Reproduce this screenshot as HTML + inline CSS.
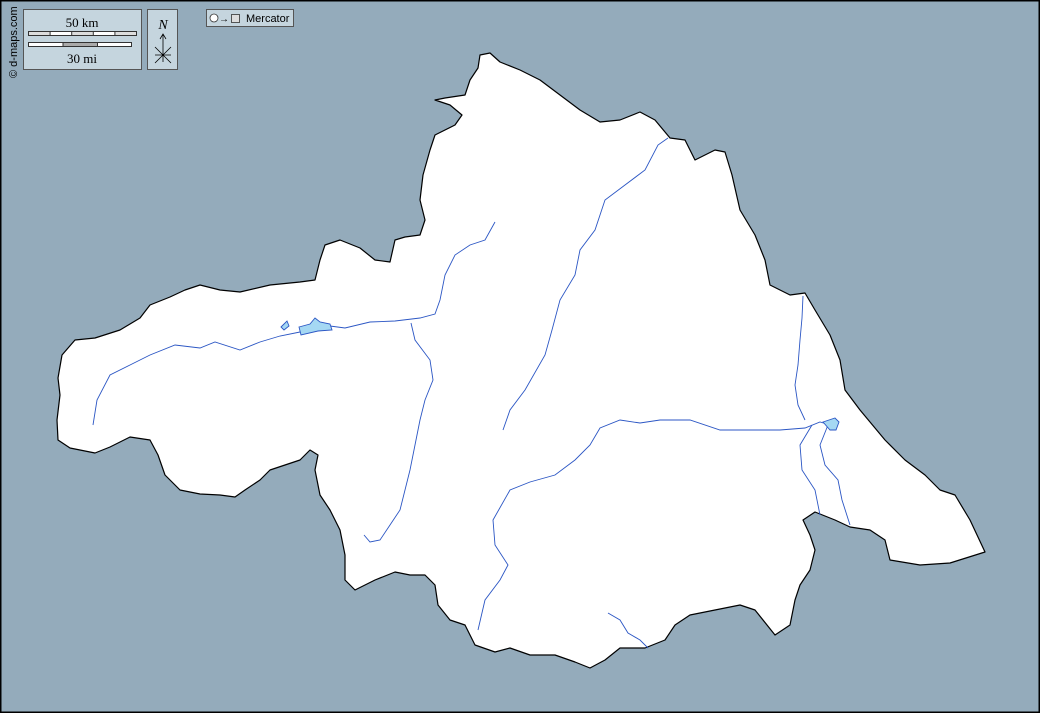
<!DOCTYPE html>
<html><head><meta charset="utf-8"><style>
body{margin:0;width:1040px;height:713px;overflow:hidden;background:#94abbb;}
svg{display:block}
</style></head><body>
<svg width="1040" height="713" viewBox="0 0 1040 713" xmlns="http://www.w3.org/2000/svg">
<rect x="0.5" y="0.5" width="1039" height="712" fill="#94abbb" stroke="#000" stroke-width="2"/>
<path fill="#fff" stroke="#000" stroke-width="1.2" stroke-linejoin="round" d="M480,55 L490,53 L500,62 L520,70 L540,80 L560,95 L580,110 L600,122 L620,120 L640,112 L655,120 L670,138 L685,140 L695,160 L705,155 L715,150 L725,152 L732,175 L740,210 L755,235 L765,260 L770,285 L790,295 L805,293 L815,310 L830,335 L840,360 L845,390 L860,410 L885,440 L905,460 L925,475 L940,490 L955,495 L970,520 L985,552 L950,563 L920,565 L890,560 L885,540 L870,530 L850,527 L835,520 L815,512 L803,520 L810,535 L815,550 L810,570 L800,585 L795,600 L790,625 L775,635 L755,610 L740,605 L715,610 L690,615 L675,625 L665,640 L645,648 L620,648 L605,660 L590,668 L575,662 L555,655 L530,655 L510,648 L495,652 L475,645 L465,625 L450,620 L438,605 L435,585 L425,575 L410,575 L395,572 L375,580 L355,590 L345,580 L345,555 L340,530 L330,510 L320,495 L315,470 L318,455 L310,450 L300,460 L285,465 L270,470 L260,480 L245,490 L235,497 L220,495 L200,494 L180,490 L165,475 L158,455 L150,440 L130,437 L110,447 L95,453 L70,448 L58,440 L57,420 L60,395 L58,378 L62,355 L75,340 L95,338 L120,330 L140,318 L150,305 L170,297 L185,290 L200,285 L220,290 L240,292 L270,285 L300,282 L315,280 L320,260 L325,245 L340,240 L360,248 L375,260 L390,262 L395,240 L405,237 L420,235 L425,220 L420,200 L423,175 L430,150 L435,135 L455,125 L462,115 L450,105 L435,100 L445,98 L465,95 L470,80 L478,68 Z"/>
<g fill="none" stroke="#2b56c4" stroke-width="0.9">
<path d="M93,425 L97,400 L110,375 L130,365 L150,355 L175,345 L200,348 L215,342 L240,350 L260,342 L280,336 L300,332 L330,326 L345,328 L370,322 L395,321 L420,318 L435,314 L440,300 L445,275 L455,255 L470,245 L485,240 L495,222"/>
<path d="M411,323 L415,340 L430,360 L433,380 L425,400 L420,420 L415,445 L410,470 L405,490 L400,510 L390,525 L380,540 L370,542 L364,535"/>
<path d="M503,430 L510,410 L525,390 L545,355 L552,330 L560,300 L575,275 L580,250 L595,230 L605,200 L625,185 L645,170 L658,145 L668,138"/>
<path d="M478,630 L485,600 L500,580 L508,565 L495,545 L493,520 L510,490 L530,482 L555,475 L575,460 L590,445 L600,428 L620,420 L640,423 L660,420 L690,420 L720,430 L750,430 L780,430 L805,428 L820,422 L830,425"/>
<path d="M805,420 L798,405 L795,385 L798,365 L800,340 L802,318 L803,296"/>
<path d="M812,425 L800,445 L802,470 L815,490 L820,515"/>
<path d="M828,425 L820,445 L825,465 L838,480 L842,500 L850,525"/>
<path d="M608,613 L620,620 L628,633 L640,640 L648,648"/>
</g>
<g fill="#a5d8f3" stroke="#2b56c4" stroke-width="0.9">
<path d="M299,327 L310,324 L315,318 L320,322 L330,324 L332,330 L318,331 L301,335 Z"/>
<path d="M281,327 L287,321 L289,326 L284,330 Z"/>
<path d="M823,422 L835,418 L839,422 L836,430 L830,430 Z"/>
</g>
<g font-family="Liberation Serif, serif" font-size="13" fill="#000">
<rect x="23.5" y="9.5" width="118" height="60" fill="#c5d5de" stroke="#555"/>
<text x="82" y="27" text-anchor="middle">50 km</text>
<rect x="28.5" y="31.5" width="108" height="4" fill="#fff" stroke="#333"/>
<rect x="28.5" y="31.5" width="21.6" height="4" fill="#ddd" stroke="#333"/>
<rect x="71.7" y="31.5" width="21.6" height="4" fill="#ddd" stroke="#333"/>
<rect x="114.9" y="31.5" width="21.6" height="4" fill="#ddd" stroke="#333"/>
<rect x="28.5" y="42.5" width="103" height="4" fill="#fff" stroke="#333"/>
<rect x="63" y="42.5" width="34.5" height="4" fill="#aaa" stroke="#333"/>
<text x="82" y="63" text-anchor="middle">30 mi</text>
<rect x="147.5" y="9.5" width="30" height="60" fill="#c5d5de" stroke="#555"/>
<text x="163" y="29" text-anchor="middle" font-style="italic" font-size="14">N</text>
<path d="M163,62 V34 M160,39 L163,34 L166,39 M155,47 L171,63 M171,47 L155,63 M155,55 H171" stroke="#000" stroke-width="0.8" fill="none"/>
<rect x="206.5" y="9.5" width="87" height="17" fill="#c5d5de" stroke="#555"/>
<circle cx="214" cy="18" r="4" fill="#fff" stroke="#333" stroke-width="0.8"/>
<text x="219" y="22" font-family="Liberation Sans, sans-serif" font-size="10">→</text>
<rect x="231.5" y="14.5" width="8" height="8" fill="#ddd" stroke="#333" stroke-width="0.8"/>
<text x="246" y="22" font-family="Liberation Sans, sans-serif" font-size="11">Mercator</text>
<text transform="translate(17,78) rotate(-90)" font-family="Liberation Sans, sans-serif" font-size="11">© d-maps.com</text>
</g>
</svg>
</body></html>
